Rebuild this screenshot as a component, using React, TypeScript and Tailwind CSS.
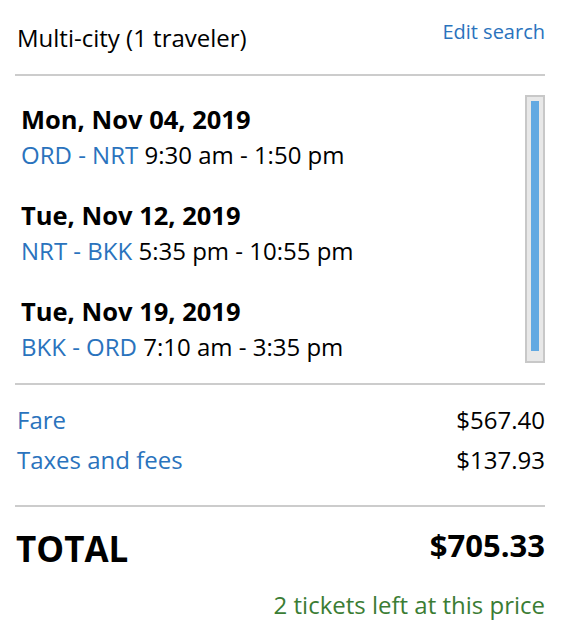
import React from 'react';

const legs = [
  { date: 'Mon, Nov 04, 2019', route: 'ORD - NRT', time: '9:30 am - 1:50 pm' },
  { date: 'Tue, Nov 12, 2019', route: 'NRT - BKK', time: '5:35 pm - 10:55 pm' },
  { date: 'Tue, Nov 19, 2019', route: 'BKK - ORD', time: '7:10 am - 3:35 pm' },
];

export default function App() {
  return (
    <div className="min-h-screen bg-white pl-[15px] pr-[17px] text-black" style={{ fontFamily: '"Open Sans", "Liberation Sans", sans-serif' }}>
      {/* Header */}
      <div className="flex h-[76px] items-start justify-between border-b-2 border-[#cccccc]">
        <h1 className="mt-[22px] pl-[2px] text-[24px] leading-[32px] font-normal">Multi-city (1 traveler)</h1>
        <a className="mt-[18px] text-[20px] leading-[28px] text-[#2a73bd]">Edit search</a>
      </div>

      {/* Itinerary */}
      <div className="pt-[19px] pb-[20px] border-b-2 border-[#cccccc]">
        <div className="flex h-[268px]">
          <div className="flex-1 overflow-hidden pl-[6px] pt-[6px]">
            {legs.map((leg) => (
              <div key={leg.date} className="mb-[24px]">
                <div className="text-[25.5px] leading-[36px] font-bold">{leg.date}</div>
                <div className="text-[24px] leading-[36px]">
                  <span className="text-[#2a73bd]">{leg.route}</span> {leg.time}
                </div>
              </div>
            ))}
          </div>
          {/* Scrollbar */}
          <div className="w-[20px] border-2 border-[#c8c8c8] bg-[#e8e8e8] px-[4px] pt-[4px] pb-[10px]">
            <div className="h-full bg-[#62a9e2]" />
          </div>
        </div>
      </div>

      {/* Fare breakdown */}
      <div className="pt-[15px] pb-[25px] border-b-2 border-[#cccccc] pl-[2px]">
        <div className="flex justify-between text-[24px] leading-[40px]">
          <span className="text-[#2a73bd]">Fare</span>
          <span>$567.40</span>
        </div>
        <div className="flex justify-between text-[24px] leading-[40px]">
          <span className="text-[#2a73bd]">Taxes and fees</span>
          <span>$137.93</span>
        </div>
      </div>

      {/* Total */}
      <div className="pt-[18px] pl-[1px]">
        <div className="flex items-start justify-between font-bold">
          <span className="text-[35px] leading-[48px]">TOTAL</span>
          <span className="text-[31px] leading-[40px]">$705.33</span>
        </div>
        <div className="mt-[16px] text-right text-[24px] leading-[32px] text-[#3b7d34]">2 tickets left at this price</div>
      </div>
    </div>
  );
}
